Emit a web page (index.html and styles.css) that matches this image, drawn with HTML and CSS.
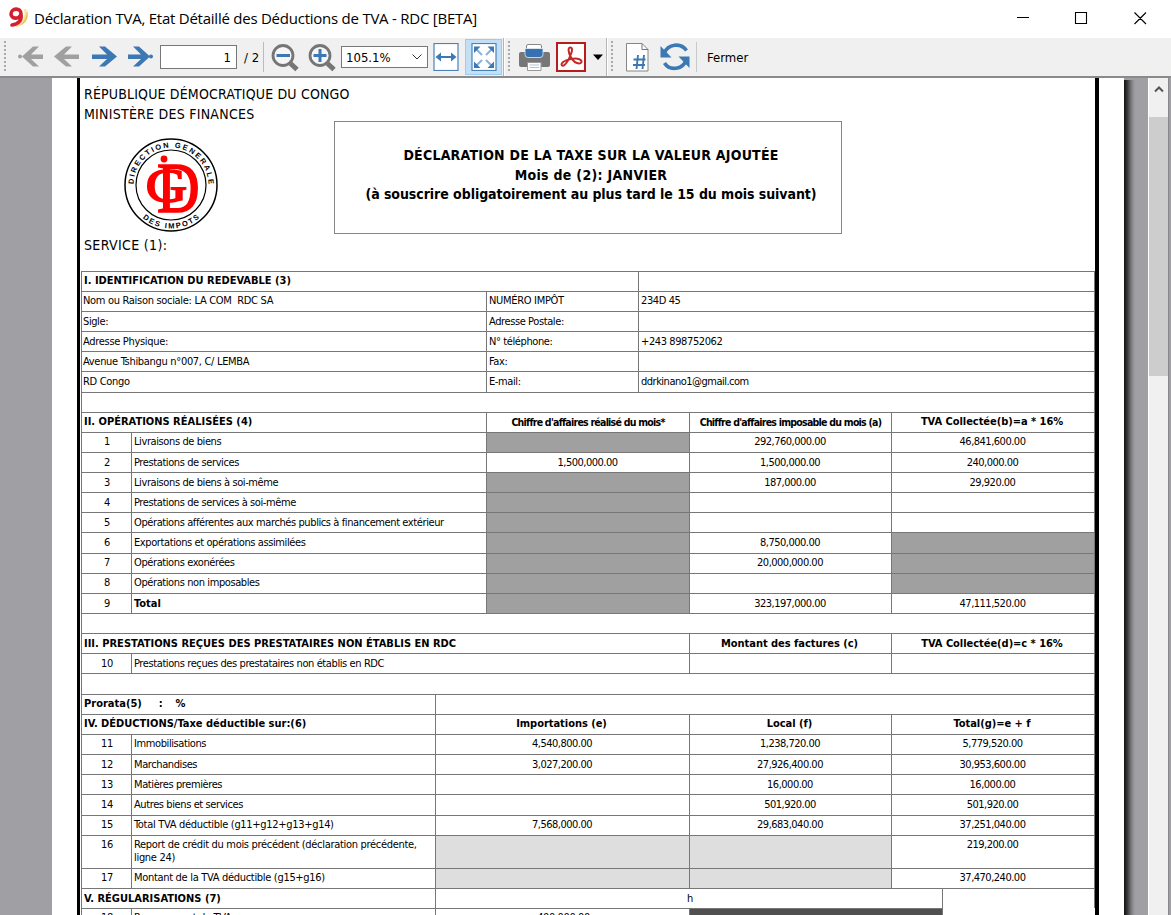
FILE: index.html
```html
<!DOCTYPE html>
<html lang="fr">
<head>
<meta charset="utf-8">
<title>Déclaration TVA</title>
<link rel="stylesheet" href="styles.css">
</head>
<body>
<div class="window">
  <header class="titlebar">
    <svg class="app-icon" width="22" height="22" viewBox="0 0 22 22"><path d="M19 3c3 8-2 16-12 17 7-4 11-9 12-17z" fill="#e9c04a"/><path d="M17 2c2 8-2 14-8 17" fill="none" stroke="#f6e3a0" stroke-width="2"/><path d="M13 7c0-7-10-6-10 0 0 5 8 6 10 0 1 6-2 10-9 11" fill="none" stroke="#d32030" stroke-width="3.6" stroke-linecap="round"/></svg>
    <h1 class="window-title">Déclaration TVA, Etat Détaillé des Déductions de TVA - RDC [BETA]</h1>
    <svg class="controls" width="132" height="16" viewBox="0 0 132 16" fill="none" stroke="#000" stroke-width="1.1"><path d="M1 7.500h12M59.500 2.500h11v11h-11zM118.500 2.500l11.500 11.500M130 2.500l-11.500 11.500"/></svg>
  </header>
  <nav class="toolbar">
    <svg class="tools" width="160" height="38" viewBox="0 0 160 38">
      <path d="M5 3v30" stroke="#aaa" stroke-width="2" stroke-dasharray="2 2"/>
      <g fill="#a0a0a0"><path d="M22 18.500L33 8.500h6l-8 8h12v4.500H31l8 7.500h-6z"/><circle cx="20" cy="18.500" r="2"/></g>
      <path d="M54 18.500L66 8.500h6l-8 8h15v4.500H64l8 7.500h-6z" fill="#a0a0a0"/>
      <path d="M117 18.500L105 8.500h-6l8 8H92v4.500h15l-8 7.500h6z" fill="#3c78b4"/>
      <g fill="#3c78b4"><path d="M150 18.500L139 8.500h-6l8 8h-13v4.500h13l-8 7.500h6z"/><circle cx="151" cy="18.500" r="2"/></g>
    </svg>
    <div class="page-input">1</div>
    <span class="page-count">/ 2</span>
    <svg class="zooms" width="78" height="38" viewBox="0 0 78 38">
      <path d="M.5 4v30" stroke="#bbb"/>
      <g fill="none" stroke="#757575"><circle cx="20" cy="17.500" r="10" stroke-width="2.800" fill="#f6f6f6"/><path d="M27.500 25.500l6.500 6" stroke-width="5"/><circle cx="57" cy="17.500" r="10" stroke-width="2.800" fill="#f6f6f6"/><path d="M64.500 25.500l6.500 6" stroke-width="5"/></g>
      <path d="M13.500 17.500h13.500M50.500 17.500h13M57 11v13" stroke="#3c78b4" stroke-width="3"/>
    </svg>
    <div class="zoom-select"><span>105.1%</span><svg width="10" height="6" viewBox="0 0 10 6"><path d="M.5.5L5 5 9.500.5" fill="none" stroke="#333"/></svg></div>
    <svg class="fit-width" width="26" height="28" viewBox="0 0 26 28"><rect x="1" y=".5" width="24" height="27" fill="#fff" stroke="#4a82bb" stroke-width="1.200"/><path d="M4 14h18" stroke="#3c78b4" stroke-width="2"/><path d="M2.500 14l5.500-4.500v9zM23.500 14l-5.500-4.500v9z" fill="#3c78b4"/></svg>
    <div class="fit-page"><svg width="26" height="28" viewBox="0 0 26 28"><rect x="1" y=".5" width="24" height="27" fill="#fff" stroke="#4a82bb" stroke-width="1.200"/><path d="M4 5l7 7M22 5l-7 7M4 24l7-7M22 24l-7-7" stroke="#8db2d8" stroke-width="2"/><path d="M3 3.500h6.500L3 10zM23 3.500h-6.500L23 10zM3 25h6.500L3 18.500zM23 25h-6.500L23 18.500z" fill="#3c78b4"/></svg></div>
    <svg class="exports" width="196" height="38" viewBox="0 0 196 38">
      <path d="M2.500 0v38M105.500 0v38" stroke="#b4b4b4"/><path d="M3.500 0v38M106.500 0v38" stroke="#fff"/>
      <path d="M8 3v30M111 3v30" stroke="#aaa" stroke-width="2" stroke-dasharray="2 2"/>
      <rect x="25.500" y="6.500" width="15" height="7" rx="1.500" fill="#fff" stroke="#888"/><path d="M20 14h27q2 0 2 2v11q0 2-2 2H20q-2 0-2-2V16q0-2 2-2z" fill="#777"/><path d="M24 10.500h18v6q0 3-3 3H27q-3 0-3-3z" fill="#3672b2" stroke="#e5edf5" stroke-width=".8"/><path d="M26.500 24.500h13.500v8h-13.500z" fill="#fff" stroke="#999"/><path d="M28.500 27h9.500M28.500 29.500h9.500" stroke="#a9c6e4"/>
      <rect x="56" y="5" width="28" height="28" fill="#fff" stroke="#b81d1d" stroke-width="2"/><path d="M69.500 9.500c-3 0-2 5 0 9 2 4 5 7 9 7 4-1 2-5-4-5-6 0-14 3-14 6 1 4 6-2 8-7 2-4 4-10 1-10z" fill="none" stroke="#c62828" stroke-width="2"/>
      <path d="M92 16.500h10l-5 5.500z" fill="#000"/>
      <path d="M125.500 5.500h15.500l6 6v21.500h-21.500z" fill="#fff" stroke="#858585"/><path d="M141 5.500v6h6" fill="none" stroke="#777"/><path d="M137 17l-1.500 14M143 17l-1.500 14M132.500 21.500h12M132 27h12" stroke="#3c78b4" stroke-width="1.900"/>
      <g fill="none" stroke="#3c78b4" stroke-width="3.600"><path d="M163 15.500c4-10 17-11 22.500-3M185.500 22c-4 10-17 11-22 3"/></g><path d="M159.500 8v11.500h11zM188.500 30V18.500h-11z" fill="#3c78b4"/>
      <path d="M195.500 4v30" stroke="#c8c8c8"/>
    </svg>
    <span class="close-label">Fermer</span>
  </nav>
  <div class="viewer">
    <main class="page">
      <div class="sheet">
        <section class="head">
          <div class="issuer">
            <p class="org">RÉPUBLIQUE DÉMOCRATIQUE DU CONGO</p>
            <p class="org ministry">MINISTÈRE DES FINANCES</p>
            <svg class="seal" width="96" height="96" viewBox="-48 -48 96 96">
              <defs><path id="arcTop" d="M-37.500 0a37.500 37.500 0 0 1 75 0"/><path id="arcBottom" d="M-43.500 0a43.500 43.500 0 0 0 87 0"/></defs>
              <circle r="46" fill="#fff" stroke="#000" stroke-width="1.500"/><circle r="35" fill="none" stroke="#000" stroke-width="1.200"/>
              <text class="ring"><textPath href="#arcTop" startOffset="50%" textLength="116">DIRECTION GENERALE</textPath></text>
              <text class="ring"><textPath href="#arcBottom" startOffset="50%" textLength="62">DES IMPOTS</textPath></text>
              <text class="mono" transform="translate(-14 26.500) scale(.82 1)" font-size="72">D</text>
              <text class="mono" transform="translate(-25.500 16.500) scale(1.180 1)" font-size="49">G</text>
              <circle cx="-7" cy="-26" r="3.400" fill="#f00"/>
            </svg>
            <p class="org service">SERVICE (1):</p>
          </div>
          <div class="declaration">
            <p class="d1">DÉCLARATION DE LA TAXE SUR LA VALEUR AJOUTÉE</p>
            <p class="d2">Mois de (2): JANVIER</p>
            <p class="d3">(à souscrire obligatoirement au plus tard le 15 du mois suivant)</p>
          </div>
        </section>
        <section class="form">
          <div class="row id0"><b class="sec s1">I. IDENTIFICATION DU REDEVABLE (3)</b><i></i></div>
          <div class="row id"><span class="wide">Nom ou Raison sociale: LA COM&nbsp; RDC SA</span><span class="wide">NUMÉRO IMPÔT</span><span>234D 45</span></div>
          <div class="row id low"><span>Sigle:</span><span>Adresse Postale:</span><span></span></div>
          <div class="row id low"><span class="wide">Adresse Physique:</span><span>N° téléphone:</span><span>+243 898752062</span></div>
          <div class="row id low"><span class="wide">Avenue Tshibangu n°007, C/ LEMBA</span><span>Fax:</span><span></span></div>
          <div class="row id low tall"><span class="wide">RD Congo</span><span>E-mail:</span><span class="mail">ddrkinano1@gmail.com</span></div>
          <div class="row blank"></div>
          <div class="row op0"><b class="sec s2">II. OPÉRATIONS RÉALISÉES (4)</b><b class="small">Chiffre d'affaires réalisé du mois*</b><b class="small">Chiffre d'affaires imposable du mois (a)</b><b class="th">TVA Collectée(b)=a * 16%</b></div>
          <div class="row op"><span>1</span><span>Livraisons de biens</span><span class="grey"></span><span>292,760,000.00</span><span>46,841,600.00</span></div>
          <div class="row op low"><span>2</span><span>Prestations de services</span><span>1,500,000.00</span><span>1,500,000.00</span><span>240,000.00</span></div>
          <div class="row op low"><span>3</span><span>Livraisons de biens à soi-même</span><span class="grey"></span><span>187,000.00</span><span>29,920.00</span></div>
          <div class="row op low"><span>4</span><span>Prestations de services à soi-même</span><span class="grey"></span><span></span><span></span></div>
          <div class="row op low"><span>5</span><span>Opérations afférentes aux marchés publics à financement extérieur</span><span class="grey"></span><span></span><span></span></div>
          <div class="row op low tall"><span>6</span><span>Exportations et opérations assimilées</span><span class="grey"></span><span>8,750,000.00</span><span class="grey"></span></div>
          <div class="row op"><span>7</span><span>Opérations exonérées</span><span class="grey"></span><span>20,000,000.00</span><span class="grey"></span></div>
          <div class="row op"><span>8</span><span>Opérations non imposables</span><span class="grey"></span><span></span><span class="grey"></span></div>
          <div class="row op low"><span>9</span><b>Total</b><span class="grey"></span><span>323,197,000.00</span><span>47,111,520.00</span></div>
          <div class="row blank"></div>
          <div class="row pr0 low"><b class="sec s3">III. PRESTATIONS REÇUES DES PRESTATAIRES NON ÉTABLIS EN RDC</b><b class="th">Montant des factures (c)</b><b class="th">TVA Collectée(d)=c * 16%</b></div>
          <div class="row pr low"><span>10</span><span>Prestations reçues des prestataires non établis en RDC</span><span></span><span></span></div>
          <div class="row blank tall"></div>
          <div class="row prorata"><b class="sec s4">Prorata(5)<span class="colon">:</span><span>%</span></b><i></i></div>
          <div class="row de0"><b class="sec s5">IV. DÉDUCTIONS/Taxe déductible sur:(6)</b><b class="th">Importations (e)</b><b class="th">Local (f)</b><b class="th">Total(g)=e + f</b></div>
          <div class="row de"><span>11</span><span>Immobilisations</span><span>4,540,800.00</span><span>1,238,720.00</span><span>5,779,520.00</span></div>
          <div class="row de low"><span>12</span><span>Marchandises</span><span>3,027,200.00</span><span>27,926,400.00</span><span>30,953,600.00</span></div>
          <div class="row de low"><span>13</span><span>Matières premières</span><span></span><span>16,000.00</span><span>16,000.00</span></div>
          <div class="row de low tall"><span>14</span><span>Autres biens et services</span><span></span><span>501,920.00</span><span>501,920.00</span></div>
          <div class="row de"><span>15</span><span class="wide">Total TVA déductible (g11+g12+g13+g14)</span><span>7,568,000.00</span><span>29,683,040.00</span><span>37,251,040.00</span></div>
          <div class="row de double"><span>16</span><span class="wide">Report de crédit du mois précédent (déclaration précédente,<br>ligne 24)</span><span class="pale"></span><span class="pale"></span><span>219,200.00</span></div>
          <div class="row de"><span>17</span><span class="wide">Montant de la TVA déductible (g15+g16)</span><span class="pale"></span><span class="pale"></span><span>37,470,240.00</span></div>
          <div class="row reg0 low"><b class="sec s6">V. RÉGULARISATIONS (7)</b><span class="center">h</span><i></i></div>
          <div class="row reg"><span>18</span><span class="wide">Reversement de TVA</span><span>400,000.00</span><span class="dark"></span><i></i></div>
        </section>
      </div>
    </main>
    <div class="shadow"></div>
    <aside class="scrollbar"><svg width="10" height="7" viewBox="0 0 10 7"><path d="M1 5.500l4-4 4 4" fill="none" stroke="#555" stroke-width="2"/></svg><div class="thumb"></div></aside>
  </div>
</div>
</body>
</html>
```
FILE: styles.css
```css
* { box-sizing: border-box; }
body { margin: 0; overflow: hidden; background: #fff; color: #000; font: 11px "DejaVu Sans Condensed", "DejaVu Sans", sans-serif; }
p, h1 { margin: 0; }
.window { width: 1171px; height: 915px; overflow: hidden; display: flex; flex-direction: column; }

.titlebar { height: 38px; flex: none; display: flex; align-items: center; padding: 0 23px 2px 8px; }
.app-icon { margin-right: 4px; }
.window-title { font: 15px/20px "Open Sans", sans-serif; letter-spacing: -0.24px; white-space: nowrap; }
.controls { margin-left: auto; }

.toolbar { height: 40px; flex: none; display: flex; align-items: center; background: #f0f0f0; border-bottom: 2px solid #8a8a8c; font-size: 13px; }
.page-input { width: 77px; height: 24px; border: 1px solid #777; background: #fff; text-align: right; padding: 3px 5px 0 0; line-height: 18px; }
.page-count { width: 26px; padding-left: 7px; white-space: nowrap; }
.zooms { flex: none; }
.zoom-select { width: 87px; height: 22px; border: 1px solid #777; background: #fff; display: flex; align-items: center; justify-content: space-between; padding: 0 5px 0 4px; }
.fit-width { margin-left: 5px; }
.fit-page { width: 37px; height: 36px; margin-left: 6px; background: #c3dff5; border: 1px solid #9acdf2; display: grid; place-items: center; }
.exports { flex: none; margin-left: -1px; }
.close-label { margin-left: 10px; }

.viewer { flex: 1; min-height: 0; display: flex; background: #a09fa4; padding-left: 52px; }
.page { width: 1072px; flex: none; background: #fff; padding-left: 25px; }
.sheet { width: 1022px; height: 837px; overflow: hidden; border-left: 3px solid #000; border-right: 4px solid #000; }
.shadow { width: 24px; margin-top: 2px; background: linear-gradient(90deg, #111, #333 3px, #85848a 8px, #a09fa4 11px); }
.scrollbar { width: 21px; margin-left: auto; margin-right: 2px; background: #f0f0f0; border-left: 1px solid #fff; border-right: 1px solid #888; padding-top: 8px; display: flex; flex-direction: column; align-items: center; }
.thumb { width: 100%; height: 259px; background: #cdcdcd; margin-top: 24px; }

.head { height: 193px; display: flex; }
.issuer { width: 254px; padding: 6px 0 0 4px; }
.org { font-size: 14px; line-height: 20px; white-space: nowrap; letter-spacing: 0.17px; }
.ministry { letter-spacing: 0.25px; }
.seal { display: block; margin: 13px 0 0 39px; }
.service { margin-top: 2px; letter-spacing: 0.35px; }
.ring { font: bold 7.5px "Liberation Sans", sans-serif; text-anchor: middle; }
.mono { font-family: "Liberation Serif", serif; fill: #f00; stroke: #f00; stroke-width: 1.6; }
.declaration { width: 508px; height: 113px; margin-top: 43px; border: 1px solid #858585; padding: 24px 0 0 6px; text-align: center; font-weight: bold; font-size: 14px; line-height: 19.5px; white-space: nowrap; }
.d1 { letter-spacing: 0.23px; }
.d2 { letter-spacing: 0.3px; }
.d3 { letter-spacing: -0.06px; }

.form { width: 1014px; margin-left: 1px; }
.row { height: 20px; display: grid; border: 0 solid #777; border-width: 1px 1px 0 1px; line-height: 14px; white-space: nowrap; }
.row > * { padding: 2px 0 0 2px; border-left: 1px solid #777; overflow: hidden; }
.row > :first-child { border-left: 0; padding-left: 1px; }
.row.low > * { padding-top: 3px; }
.row.tall { height: 21px; }
.row.double { height: 33px; line-height: 13px; }
.row span { letter-spacing: -0.4px; }
.row span.wide { letter-spacing: -0.31px; }
.row span.mail { letter-spacing: -0.5px; }
.row b { font-size: 11px; }
.row > .sec { padding-left: 2px; }
.th, .small, .center { text-align: center; }
.row > .th { padding: 2px 2px 0 0; letter-spacing: -0.04px; }
.row.low > .th { padding-top: 3px; }
.row > .small { font-size: 10.500px; letter-spacing: -0.75px; padding-left: 0; }
.id0 { grid-template-columns: 556px 1fr; }
.id { grid-template-columns: 404px 152px 1fr; }
.op0 { grid-template-columns: 404px 203px 202px 1fr; }
.op { grid-template-columns: 49px 355px 203px 202px 1fr; }
.pr0 { grid-template-columns: 607px 202px 1fr; }
.pr { grid-template-columns: 49px 558px 202px 1fr; }
.prorata { grid-template-columns: 353px 1fr; }
.de0 { grid-template-columns: 353px 254px 202px 1fr; }
.de { grid-template-columns: 49px 304px 254px 202px 1fr; }
.reg0 { grid-template-columns: 353px 507px 1fr; }
.reg { grid-template-columns: 49px 304px 254px 253px 1fr; border-right: 0; }
.reg > i { background: #fff; margin-top: -1px; }
.op > *, .de > *, .reg > * { text-align: center; }
.op > :nth-child(2), .de > :nth-child(2), .reg > :nth-child(2) { text-align: left; }
.op > :nth-child(n+3), .de > :nth-child(n+3) { padding-left: 0; padding-right: 1px; }
.op > span:nth-child(n+3), .de > span:nth-child(n+3) { letter-spacing: -0.5px; }
.pr > :first-child { text-align: center; }
.grey { background: #a0a0a0; }
.pale { background: #dedede; }
.dark { background: #505050; }
.row .colon { padding: 0 13px 0 17px; }
```
